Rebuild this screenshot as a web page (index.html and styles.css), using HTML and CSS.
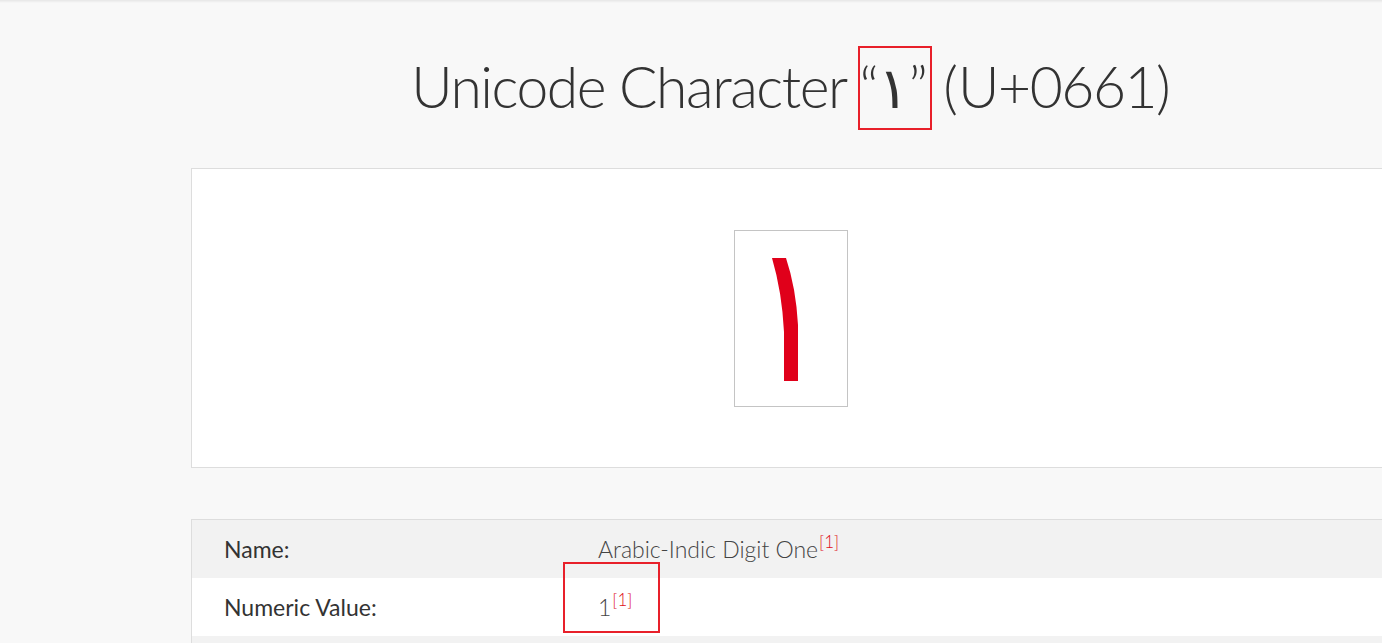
FILE: index.html
```html
<!DOCTYPE html>
<html lang="en">
<head>
<meta charset="utf-8">
<title>Unicode Character “١” (U+0661)</title>
<link rel="stylesheet" href="styles.css">
</head>
<body>
<div class="topbar"></div>
<main class="container">
  <h1 class="title">Unicode Character <span class="mark mark-char">“١”</span> (U+0661)</h1>
  <section class="card">
    <div class="glyph-box">
      <svg class="glyph" width="114" height="177" viewBox="0 0 114 177" aria-label="١">
        <path d="M38 28 L52 28 Q62 58 64 95 L64 151 L50 151 L50 102 Q48 62 38 28 Z" fill="#e0001a"/>
      </svg>
    </div>
  </section>
  <table class="props">
    <tr class="odd">
      <th>Name:</th>
      <td>Arabic-Indic Digit One<sup class="ref">[1]</sup></td>
    </tr>
    <tr class="even">
      <th>Numeric Value:</th>
      <td><span class="mark mark-value">1<sup class="ref">[1]</sup></span></td>
    </tr>
    <tr class="odd">
      <th>&nbsp;</th>
      <td>&nbsp;</td>
    </tr>
  </table>
</main>
</body>
</html>
```
FILE: styles.css
```css
html {
  overflow: hidden;
}
body {
  margin: 0;
  background: #f8f8f8;
  font-family: Lato, "Noto Sans", "DejaVu Sans", sans-serif;
  color: #333;
}
.topbar {
  height: 3px;
  background: linear-gradient(#e6e6e6, #f8f8f8);
}
.container {
  width: 1200px;
  margin-left: 191px;
}
.title {
  margin: 0;
  padding: 43px 0 0;
  height: 117px;
  box-sizing: border-box;
  text-align: center;
  font-weight: 300;
  font-size: 57px;
  line-height: 80px;
  color: #333;
  letter-spacing: -1.45px;
}
.mark {
  position: relative;
}
.mark-char::after {
  content: "";
  position: absolute;
  left: -2px;
  right: -4px;
  top: -6px;
  bottom: -10px;
  border: 2px solid #e8202a;
}
.card {
  margin-top: 48px;
  height: 300px;
  box-sizing: border-box;
  background: #fff;
  border: 1px solid #ddd;
  display: flex;
  justify-content: center;
  align-items: flex-start;
  padding-top: 61px;
}
.glyph-box {
  width: 114px;
  height: 177px;
  box-sizing: border-box;
  border: 1px solid #c4c4c4;
  background: #fff;
}
.glyph {
  display: block;
  margin: -1px;
}
.props {
  margin-top: 51px;
  width: 100%;
  border-collapse: collapse;
  border-top: 1px solid #ddd;
  border-left: 1px solid #ddd;
  font-size: 23px;
}
.props tr {
  height: 58px;
}
.props tr.odd {
  background: #f2f2f2;
}
.props tr.even {
  background: #fff;
}
.props th {
  text-align: left;
  font-weight: 400;
  width: 374px;
  padding: 0 0 0 32px;
  color: #333;
}
.props td {
  font-weight: 300;
  padding: 0;
  color: #444;
}
.ref {
  color: #e0101a;
  font-size: 17px;
  vertical-align: 10px;
  line-height: 0;
  margin-left: 1px;
}
.mark-value::after {
  content: "";
  position: absolute;
  left: -35px;
  right: -28px;
  top: -31px;
  bottom: -12px;
  border: 2px solid #e8202a;
}
```
